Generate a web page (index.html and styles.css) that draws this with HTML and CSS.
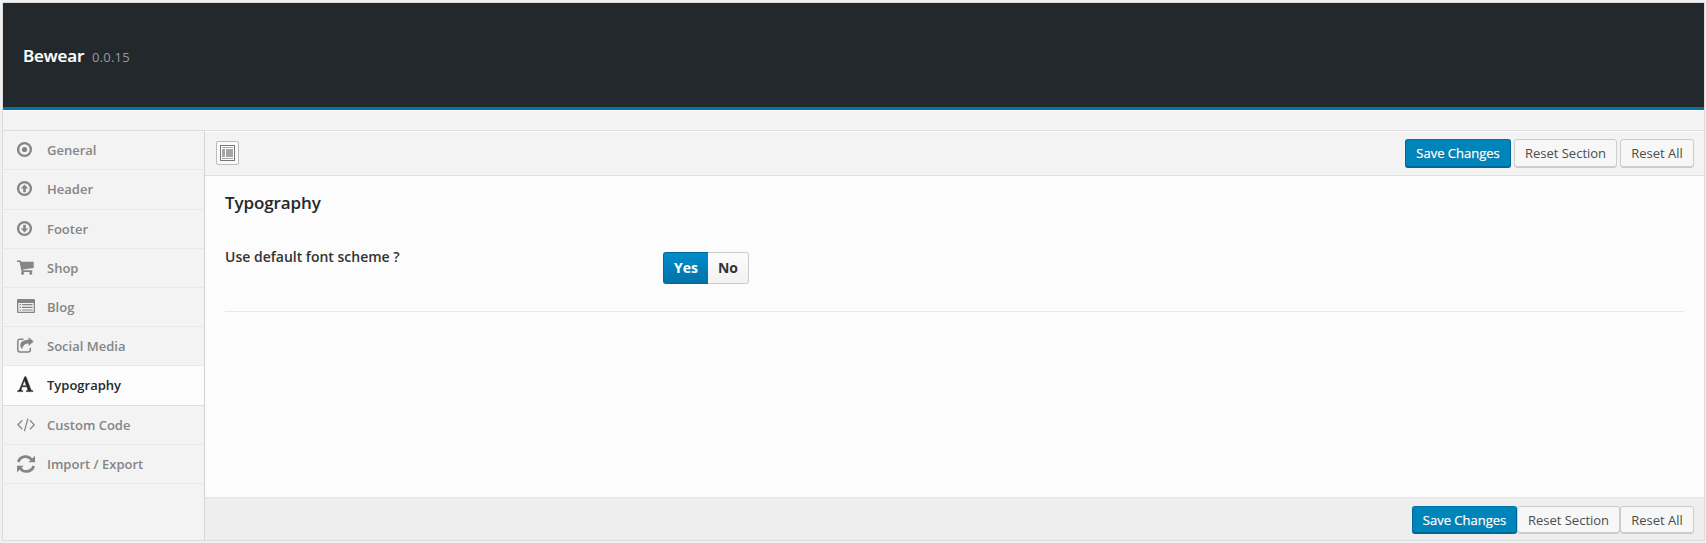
FILE: index.html
```html
<!DOCTYPE html>
<html lang="en">
<head>
<meta charset="utf-8">
<title>Bewear options</title>
<link rel="stylesheet" href="styles.css">
</head>
<body>
<div class="panel">
  <header class="header"><h1 class="title">Bewear</h1><span class="version">0.0.15</span></header>
  <div class="intro"></div>
  <div class="body">
    <nav class="sidebar">
      <a class="item"><svg class="icon" viewBox="0 0 18 18"><circle cx="7.5" cy="8.5" r="6.4" fill="none" stroke="currentColor" stroke-width="2.3"/><circle cx="7.5" cy="8.5" r="2.6"/></svg><span class="label">General</span></a>
      <a class="item tall"><svg class="icon" viewBox="0 0 18 18"><circle cx="7.5" cy="8.5" r="6.4" fill="none" stroke="currentColor" stroke-width="2.3"/><path d="M7.5 4.5L11.2 8.6H8.8V12.3H6.2V8.6H3.8Z"/></svg><span class="label">Header</span></a>
      <a class="item"><svg class="icon" viewBox="0 0 18 18"><circle cx="7.5" cy="8.5" r="6.4" fill="none" stroke="currentColor" stroke-width="2.3"/><path d="M7.5 12.5L11.2 8.4H8.8V4.7H6.2V8.4H3.8Z"/></svg><span class="label">Footer</span></a>
      <a class="item"><svg class="icon" viewBox="0 0 18 18"><path d="M0 1.4H3.8L4.3 2.8H16.7V9L6 10.4L6.2 11.3H15.3V12.9H4.7L2.5 3H0Z"/><circle cx="5.6" cy="14.2" r="1.5"/><circle cx="13.7" cy="14.2" r="1.5"/></svg><span class="label">Shop</span></a>
      <a class="item"><svg class="icon" viewBox="0 0 18 18"><path fill-rule="evenodd" d="M1 1H17Q18 1 18 2V14Q18 15 17 15H1Q0 15 0 14V2Q0 1 1 1ZM1.3 5V13.7H16.7V5Z"/><path d="M2.5 6H4V7.2H2.5ZM5 6H15.6V7.2H5ZM2.5 8.7H4V9.9H2.5ZM5 8.7H15.6V9.9H5ZM2.5 11.4H4V12.6H2.5ZM5 11.4H15.6V12.6H5Z"/></svg><span class="label">Blog</span></a>
      <a class="item"><svg class="icon" viewBox="0 0 18 18"><path d="M6.5 2.2H3Q.8 2.2 .8 4.4V12.8Q.8 15 3 15H11.2Q13.4 15 13.4 12.8V10.8" fill="none" stroke="currentColor" stroke-width="1.5"/><path d="M11.6 .3L16.6 4.6L11.6 9V6.6Q6.2 6.4 5 12.3Q3.2 10.8 3.2 8.1Q3.6 3 11.6 2.8Z"/></svg><span class="label">Social Media</span></a>
      <a class="item tall active"><svg class="icon" viewBox="0 0 18 18"><path stroke="currentColor" stroke-width=".5" fill-rule="evenodd" d="M7.7 .7H9L13.8 13.4Q14.2 14.6 15.9 14.8V15.6H9.3V14.8Q11.2 14.7 10.8 13.4L9.9 10.8H5L4.2 13Q3.8 14.6 5.8 14.8V15.6H.6V14.8Q2.1 14.6 2.7 13.2ZM7.4 4.2L5.4 9.7H9.4Z"/></svg><span class="label">Typography</span></a>
      <a class="item"><svg class="icon" viewBox="0 0 18 18"><path d="M5.3 4.2L1 8.8L5.3 13.2M12.9 4.2L17.3 8.8L12.9 13.2M10.9 2.5L7.4 15.2" fill="none" stroke="currentColor" stroke-width="1.25"/></svg><span class="label">Custom Code</span></a>
      <a class="item"><svg class="icon" viewBox="0 0 18 18"><path d="M1.3 7A7.6 7.6 0 0 1 14.8 4.8M16.7 11A7.6 7.6 0 0 1 3.2 13.2" fill="none" stroke="currentColor" stroke-width="2.7"/><path d="M18 .7V7.2H11.4ZM0 17.3V10.8H6.6Z"/></svg><span class="label">Import / Export</span></a>
    </nav>
    <main class="main">
      <div class="toolbar">
        <span class="expand"><svg width="15" height="16" viewBox="0 0 15 16"><rect x=".5" y=".5" width="14" height="15" fill="#fff" stroke="#777"/><path d="M2 2H13V3H2ZM2 4H5V12H2ZM6 4H13V12H6ZM2 13H13V14H2Z" fill="#a5a5a5"/></svg></span>
        <div class="actions"><button class="button primary">Save Changes</button><button class="button section">Reset Section</button><button class="button all">Reset All</button></div>
      </div>
      <section class="content">
        <h2 class="heading">Typography</h2>
        <div class="field"><div class="question">Use default font scheme ?</div><div class="switch"><span class="yes">Yes</span><span class="no">No</span></div></div>
      </section>
      <div class="bottom">
        <div class="actions tight"><button class="button primary">Save Changes</button><button class="button section">Reset Section</button><button class="button all">Reset All</button></div>
      </div>
    </main>
  </div>
</div>
</body>
</html>
```
FILE: styles.css
```css
* { box-sizing: border-box; }
body { margin: 0; padding: 2px 1px 0 2px; height: 543px; background: #f1f1f1; font-family: "Open Sans", sans-serif; font-size: 13px; overflow: hidden; }
.panel { height: 539px; border: 1px solid #dcdcdc; display: flex; flex-direction: column; background: #f3f3f3; }
.header { height: 107px; flex: none; background: #23282d; border-bottom: 3px solid #0074a8; padding: 0 20px; display: flex; align-items: baseline; line-height: 106px; }
.title { margin: 0; font-size: 17px; font-weight: 600; color: #fff; width: 69px; letter-spacing: -.1px; -webkit-text-stroke: .2px #fff; }
.version { color: #999; font-size: 13px; letter-spacing: .2px; }
.intro { height: 21px; flex: none; border-top: 1px solid #fff; border-bottom: 1px solid #dedede; }
.body { flex: 1; display: flex; min-height: 0; }
.sidebar { width: 202px; flex: none; border-right: 1px solid #d4d4d4; }
.item { display: flex; height: 39px; padding: 0 0 0 14px; border-bottom: 1px solid #e8e8e8; color: #858585; }
.item.tall { height: 40px; }
.item.active { background: #fcfcfc; color: #23282d; border-color: #dedede; }
.icon { width: 18px; height: 18px; margin-top: 10px; fill: currentColor; flex: none; }
.label { margin-left: 12px; line-height: 39px; font-weight: 600; white-space: nowrap; }
.main { flex: 1; display: flex; flex-direction: column; background: #fcfcfc; }
.toolbar { height: 45px; flex: none; background: #f3f3f3; border-top: 1px solid #fff; border-bottom: 1px solid #dedede; padding: 7px 10px 0 11px; display: flex; justify-content: space-between; }
.expand { width: 23px; height: 24px; margin-top: 2px; border: 1px solid #bbb; border-radius: 2px; background: #fafafa; display: flex; align-items: center; justify-content: center; }
.actions { display: flex; gap: 3px; }
.button { height: 29px; margin: 0; padding: 0 0 1px; border: 1px solid #ccc; border-radius: 3px; background: #f7f7f7; box-shadow: inset 0 -1px 0 #ccc; font: 13px "Open Sans", sans-serif; color: #4c4c4c; white-space: nowrap; }
.primary { width: 106px; background: #0085ba; border-color: #0073aa #006799 #006799; box-shadow: inset 0 -1px 0 #006799; color: #fff; text-shadow: 0 1px 1px #006799; -webkit-text-stroke: .25px #fff; }
.section { width: 103px; }
.all { width: 74px; }
.content { flex: 1; padding: 14px 20px 0; }
.heading { margin: 0; font-size: 17px; line-height: 25px; font-weight: 600; color: #23282d; letter-spacing: -.1px; }
.field { height: 97px; border-bottom: 1px solid #e7e7e7; display: flex; }
.question { width: 438px; padding-top: 32px; line-height: 20px; font-weight: 600; font-size: 14px; color: #333; }
.switch { display: flex; height: 32px; margin-top: 37px; line-height: 30px; font-size: 14px; font-weight: 700; text-align: center; }
.yes { width: 45px; color: #fff; background: linear-gradient(#008ccc, #0073a8); border: 1px solid #006799; border-right-width: 0; border-radius: 3px 0 0 3px; }
.no { width: 41px; color: #333; background: linear-gradient(#fcfcfc, #f2f2f2); border: 1px solid #ccc; border-left-width: 0; border-radius: 0 3px 3px 0; }
.bottom { height: 43px; flex: none; background: #eee; border-top: 1px solid #e6e6e6; padding: 8px 10px 0; display: flex; justify-content: flex-end; }
.tight { gap: 0; }
.tight .button { height: 28px; }
.tight .primary { width: 105px; }
```
